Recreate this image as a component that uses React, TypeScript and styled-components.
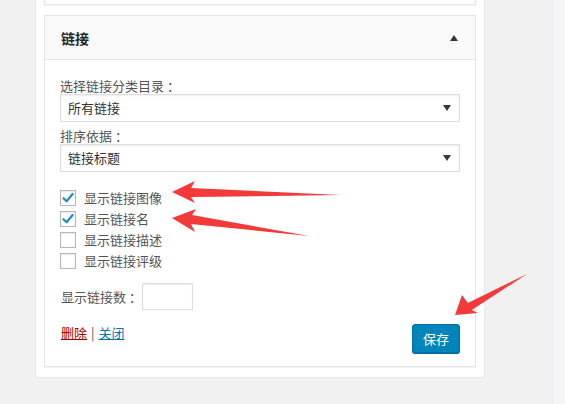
import React from "react";
import styled, { createGlobalStyle } from "styled-components";

const GlobalStyle = createGlobalStyle`
  html, body {
    margin: 0;
    padding: 0;
    background: #f1f1f1;
  }
  body {
    font-family: "Noto Sans CJK SC", "Noto Sans", sans-serif;
    font-size: 13px;
    color: #555;
  }
`;

const Page = styled.div`
  position: relative;
  display: flex;
  width: 565px;
  height: 404px;
  overflow: hidden;
`;

const LeftGap = styled.div`
  width: 35px;
`;

const Sidebar = styled.div`
  width: 432px;
  align-self: flex-start;
  background: #fff;
  padding: 0 8px 10px;
  border-right: 1px solid #e8e8e8;
  border-left: 1px solid #e8e8e8;
  border-bottom: 1px solid #e8e8e8;
`;

const Gap = styled.div`
  width: 69px;
`;

const Strip = styled.div`
  flex: 1;
  background: #f4f5f8;
`;

const PrevWidget = styled.div`
  height: 4px;
  background: #fff;
  border: 1px solid #e5e5e5;
  border-top: none;
  box-shadow: 0 1px 1px rgba(0, 0, 0, 0.04);
  margin-bottom: 10px;
`;

const Panel = styled.div`
  border: 1px solid #e5e5e5;
  box-shadow: 0 1px 1px rgba(0, 0, 0, 0.04);
`;

const PanelHeader = styled.div`
  display: flex;
  align-items: center;
  justify-content: space-between;
  height: 43px;
  padding: 0 17px 0 16px;
  background: #f9f9f9;
  border-bottom: 1px solid #e5e5e5;
`;

const Title = styled.h3`
  margin: 0;
  font-size: 14px;
  font-weight: 600;
  color: #23282d;
  line-height: 18px;
`;

const PanelBody = styled.div`
  padding: 18px 15px 13px;
`;

const Label = styled.div<{ $top?: number }>`
  line-height: 16px;
  margin-top: ${(p) => p.$top ?? 0}px;
  color: #555;
`;

const Colon = styled.span`
  padding-left: 3px;
`;

const SelectBox = styled.div`
  display: flex;
  align-items: center;
  justify-content: space-between;
  height: 26px;
  padding: 0 8px 0 7px;
  border: 1px solid #ddd;
  box-shadow: inset 0 1px 2px rgba(0, 0, 0, 0.07);
  background: #fff;
  color: #333;
  line-height: 18px;
`;

const CheckList = styled.div`
  display: flex;
  flex-direction: column;
  margin-top: 15px;
`;

const CheckRow = styled.label`
  display: flex;
  align-items: center;
  height: 21px;
  gap: 8px;
  line-height: 18px;
`;

const Box = styled.span`
  display: flex;
  align-items: center;
  justify-content: center;
  width: 14px;
  height: 14px;
  border: 1px solid #b4b9be;
  background: #fff;
  box-shadow: inset 0 1px 2px rgba(0, 0, 0, 0.1);
`;

const CountRow = styled.div`
  display: flex;
  align-items: center;
  gap: 0;
  margin-top: 12px;
  padding-left: 1px;
`;

const CountInput = styled.div`
  width: 49px;
  height: 25px;
  border: 1px solid #ddd;
  box-shadow: inset 0 1px 2px rgba(0, 0, 0, 0.07);
  background: #fff;
`;

const Footer = styled.div`
  display: flex;
  justify-content: space-between;
  align-items: flex-start;
  margin-top: 14px;
`;

const Links = styled.div`
  display: flex;
  gap: 4px;
  line-height: 18px;
  padding-left: 1px;
`;

const TextLink = styled.a<{ $danger?: boolean }>`
  color: ${(p) => (p.$danger ? "#a00" : "#0073aa")};
  text-decoration: underline;
`;

const Sep = styled.span`
  color: #555;
`;

const SaveButton = styled.button`
  width: 48px;
  height: 29px;
  padding: 0;
  border: 1px solid #0073aa;
  border-radius: 3px;
  background: #0085ba;
  box-shadow: 0 1px 0 #006799;
  color: #fff;
  font-family: inherit;
  font-size: 13px;
  line-height: 18px;
`;

const Overlay = styled.svg`
  position: absolute;
  left: 0;
  top: 0;
  pointer-events: none;
`;

const Caret = () => (
  <svg width="8" height="6" viewBox="0 0 8 6">
    <path d="M0 0 L8 0 L4 6 Z" fill="#32373c" />
  </svg>
);

const Check = () => (
  <svg width="14" height="14" viewBox="0 0 14 14">
    <path
      d="M2.5 7.2 L5.6 10.2 L11.6 3"
      fill="none"
      stroke="#1e8cbe"
      strokeWidth="2.2"
      strokeLinecap="round"
      strokeLinejoin="round"
    />
  </svg>
);

const options = [
  { label: "显示链接图像", checked: true },
  { label: "显示链接名", checked: true },
  { label: "显示链接描述", checked: false },
  { label: "显示链接评级", checked: false },
];

export default function App() {
  return (
    <>
      <GlobalStyle />
      <Page>
        <LeftGap />
        <Sidebar>
          <PrevWidget />
          <Panel>
            <PanelHeader>
              <Title>链接</Title>
              <svg width="8" height="6" viewBox="0 0 8 6">
                <path d="M4 0 L8 6 L0 6 Z" fill="#32373c" />
              </svg>
            </PanelHeader>
            <PanelBody>
              <Label>
                选择链接分类目录<Colon>：</Colon>
              </Label>
              <SelectBox>
                <span>所有链接</span>
                <Caret />
              </SelectBox>
              <Label $top={6}>
                排序依据<Colon>：</Colon>
              </Label>
              <SelectBox>
                <span>链接标题</span>
                <Caret />
              </SelectBox>
              <CheckList>
                {options.map((o) => (
                  <CheckRow key={o.label}>
                    <Box>{o.checked && <Check />}</Box>
                    <span>{o.label}</span>
                  </CheckRow>
                ))}
              </CheckList>
              <CountRow>
                <span>
                  显示链接数<Colon>：</Colon>
                </span>
                <CountInput />
              </CountRow>
              <Footer>
                <Links>
                  <TextLink $danger>删除</TextLink>
                  <Sep>|</Sep>
                  <TextLink>关闭</TextLink>
                </Links>
                <SaveButton>保存</SaveButton>
              </Footer>
            </PanelBody>
          </Panel>
        </Sidebar>
        <Gap />
        <Strip />
        <Overlay width="565" height="404" viewBox="0 0 565 404">
          <g fill="#f23a3a">
            <polygon points="172,192 195,181 191,188 341,195 191,197 195,203" />
            <polygon points="172,218 196,209 192,215 309,236 191,224 195,232" />
            <polygon points="455,315 462,295 467.8,303 527,274 471.8,310 478,313" />
          </g>
        </Overlay>
      </Page>
    </>
  );
}
